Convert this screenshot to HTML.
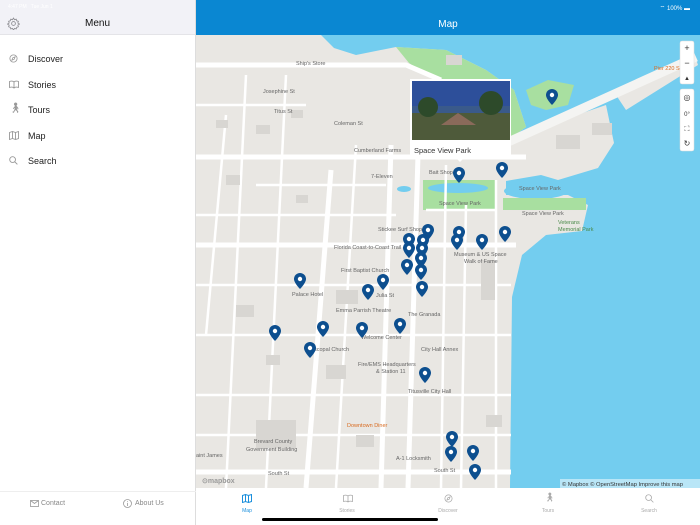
<!DOCTYPE html>
<html><head><meta charset="utf-8"><style>
*{margin:0;padding:0;box-sizing:border-box}
body{width:700px;height:525px;overflow:hidden;font-family:"Liberation Sans",sans-serif;background:#fff;position:relative}
#side{position:absolute;left:0;top:0;width:196px;height:525px;background:#fff;border-right:1px solid #ddd}
#sh{height:35px;background:#f2f2f7;border-bottom:1px solid #e4e4e8;position:relative}
#sh .t{position:absolute;left:0;right:0;top:18px;text-align:center;font-size:10px;color:#111}
.st{position:absolute;top:4px;font-size:5px;color:#fff}
.mi{position:absolute;left:28px;font-size:9px;color:#222}
.ic{position:absolute;left:9px}
#sf{position:absolute;top:491px;left:0;width:196px;border-top:1px solid #eee;height:34px;font-size:7px;color:#888}
#hdr{position:absolute;left:196px;top:0;width:504px;height:35px;background:#0a87d2}
#hdr .t{position:absolute;left:0;right:0;top:19px;text-align:center;color:#fff;font-size:10px}
#map{position:absolute;left:196px;top:35px}
#tab{position:absolute;left:196px;top:488px;width:504px;height:37px;background:#fff}
.tb{position:absolute;top:20px;font-size:5px;color:#aaa;text-align:center;width:40px}
</style></head><body>
<div id="side">
<div id="sh"><span class="st" style="left:8px">4:47 PM &nbsp; Tue Jun 1</span>
<svg class="ic" style="left:7px;top:17px" width="13" height="13" viewBox="0 0 24 24" fill="none" stroke="#8e8e93" stroke-width="1.6"><circle cx="12" cy="12" r="3.5"/><path d="M12 2l2 3 3-1 1 3 3 1-1 3 3 2-3 2 1 3-3 1-1 3-3-1-2 3-2-3-3 1-1-3-3-1 1-3-3-2 3-2-1-3 3-1 1-3 3 1z"/></svg>
<div class="t">Menu</div></div>
<svg class="ic" style="top:54px" width="9" height="9" viewBox="0 0 10 10" fill="none" stroke="#999" stroke-width="0.9"><circle cx="5" cy="5" r="4"/><path d="M6.8 3.2L5.8 5.8 3.2 6.8 4.2 4.2z"/></svg><div class="mi" style="top:54px">Discover</div>
<svg class="ic" style="top:80px" width="10" height="9" viewBox="0 0 10 9" fill="none" stroke="#999" stroke-width="0.9"><path d="M5 2C4 1 2 1 .5 1.5v6C2 7 4 7 5 8c1-1 3-1 4.5-.5v-6C8 1 6 1 5 2zM5 2v6"/></svg><div class="mi" style="top:80px">Stories</div>
<div class="ic" style="top:103px;font-size:10px;color:#999">🚶︎</div><div class="mi" style="top:105px">Tours</div>
<svg class="ic" style="top:131px" width="10" height="9" viewBox="0 0 10 9" fill="none" stroke="#999" stroke-width="0.9"><path d="M.5 1.5l3-1 3 1 3-1v7l-3 1-3-1-3 1zM3.5.5v7M6.5 1.5v7"/></svg><div class="mi" style="top:131px">Map</div>
<svg class="ic" style="top:156px" width="9" height="9" viewBox="0 0 10 10" fill="none" stroke="#999" stroke-width="1"><circle cx="4" cy="4" r="3.2"/><path d="M6.4 6.4L9.3 9.3"/></svg><div class="mi" style="top:156px">Search</div>
<div id="sf"><svg style="position:absolute;left:30px;top:8px" width="9" height="7" viewBox="0 0 9 7" fill="none" stroke="#999" stroke-width=".8"><rect x=".5" y=".5" width="8" height="6"/><path d="M.5 .5l4 3 4-3"/></svg><span style="position:absolute;left:41px;top:8px">Contact</span>
<svg style="position:absolute;left:123px;top:7px" width="9" height="9" viewBox="0 0 9 9" fill="none" stroke="#999" stroke-width=".8"><circle cx="4.5" cy="4.5" r="4"/><path d="M4.5 4v3M4.5 2.3v.8"/></svg><span style="position:absolute;left:135px;top:8px">About Us</span></div>
</div>
<div id="hdr"><span class="st" style="right:10px;top:4px;font-size:6px">⌔ 100% ▬</span><div class="t">Map</div></div>
<svg id="map" width="504" height="453" viewBox="0 0 504 453" font-family="Liberation Sans" >
<defs><g id="p"><path d="M0 0a6 6 0 0 1 6 6c0 4-6 10-6 10S-6 10-6 6a6 6 0 0 1 6-6z" fill="#0d4f8f"/><circle cy="6" r="2.2" fill="#fff"/></g></defs>
<rect width="504" height="453" fill="#73cdef"/>
<path d="M0 0H125L138 13 160 20 200 12 250 15 290 35 318 55 330 92 316 102 410 70 418 108 402 133 362 145 345 140 310 146 310 160 372 160 392 170 386 196 350 200 326 220 316 262 314 453H0Z" fill="#e9e7e3"/>
<path d="M200 12L250 15 290 35 318 55 330 92 316 102 300 80 265 60 230 40 213 28Z" fill="#a8dfa0"/>
<path d="M330 55L352 45 378 50 372 70 350 75 335 70Z" fill="#a8dfa0"/>
<ellipse cx="340" cy="156" rx="32" ry="8" fill="#73cdef"/>
<path d="M420 60L470 32 498 18 502 30 470 50 430 75Z" fill="#e9e7e3"/>
<path d="M310 108L500 22" stroke="#f4f4f2" stroke-width="9"/>
<rect x="227" y="145" width="72" height="30" fill="#a8dfa0"/><ellipse cx="262" cy="153" rx="30" ry="5" fill="#73cdef"/>
<rect x="307" y="163" width="83" height="12" fill="#a8dfa0"/>
<ellipse cx="208" cy="154" rx="7" ry="3" fill="#73cdef"/>
<g stroke="#fff" stroke-width="5" fill="none">
<path d="M0 30H210L245 45"/><path d="M0 122H330"/><path d="M0 210H320"/><path d="M0 437H315"/>
<path d="M195 110L185 453"/><path d="M222 120L212 453"/><path d="M135 135L110 453"/>
</g>
<g stroke="#fff" stroke-width="2.5" fill="none">
<path d="M0 70H110M0 180H200M0 250H315M0 300H315M0 360H315M0 400H315M60 150H190"/>
<path d="M50 40L30 453M90 40L70 453M30 80L10 300M160 110L140 453M250 130L245 453M270 170L265 453M300 145L300 453M230 175L300 175"/>
</g>
<g fill="#d8d6d2">
<rect x="20" y="85" width="12" height="8"/><rect x="60" y="90" width="14" height="9"/><rect x="95" y="75" width="12" height="8"/><rect x="30" y="140" width="14" height="10"/><rect x="100" y="160" width="12" height="8"/><rect x="40" y="270" width="18" height="12"/><rect x="70" y="320" width="14" height="10"/><rect x="130" y="330" width="20" height="14"/><rect x="160" y="400" width="18" height="12"/><rect x="60" y="385" width="40" height="28"/><rect x="290" y="380" width="16" height="12"/><rect x="140" y="255" width="22" height="14"/><rect x="285" y="225" width="14" height="40"/><rect x="360" y="100" width="24" height="14"/><rect x="396" y="88" width="20" height="12"/><rect x="250" y="20" width="16" height="10"/><rect x="275" y="105" width="18" height="10"/>
</g>
<g font-size="5.5" fill="#666">
<text x="100" y="30">Ship's Store</text><text x="67" y="58">Josephine St</text><text x="78" y="78">Titus St</text><text x="138" y="90">Coleman St</text><text x="158" y="117">Cumberland Farms</text><text x="175" y="143">7-Eleven</text><text x="233" y="139">Bait Shop</text><text x="243" y="170">Space View Park</text><text x="323" y="155">Space View Park</text><text x="326" y="180">Space View Park</text><text x="362" y="189" fill="#4a8a4a">Veterans</text><text x="362" y="196" fill="#4a8a4a">Memorial Park</text><text x="182" y="196">Stickee Surf Shop</text><text x="138" y="214">Florida Coast-to-Coast Trail</text><text x="145" y="237">First Baptist Church</text><text x="258" y="221">Museum &amp; US Space</text><text x="268" y="228">Walk of Fame</text><text x="96" y="261">Palace Hotel</text><text x="180" y="262">Julia St</text><text x="140" y="277">Emma Parrish Theatre</text><text x="212" y="281">The Granada</text><text x="165" y="304">Welcome Center</text><text x="225" y="316">City Hall Annex</text><text x="162" y="331">Fire/EMS Headquarters</text><text x="180" y="338">&amp; Station 11</text><text x="212" y="358">Titusville City Hall</text><text x="151" y="392" fill="#d86a1f">Downtown Diner</text><text x="58" y="408">Brevard County</text><text x="50" y="416">Government Building</text><text x="200" y="425">A-1 Locksmith</text><text x="72" y="440">South St</text><text x="238" y="437">South St</text><text x="110" y="316">Episcopal Church</text><text x="0" y="422">aint James</text><text x="458" y="35" fill="#d86a1f">Pier 220 Seaf</text>
</g>
<text x="6" y="448" font-size="7" fill="#999" font-weight="bold">⊙mapbox</text>
<rect x="364" y="444" width="140" height="9" fill="rgba(255,255,255,.5)"/><text x="366" y="451" font-size="5.8" fill="#333">© Mapbox © OpenStreetMap Improve this map</text>
<g transform="translate(0,-6)">
<use href="#p" x="356" y="60"/><use href="#p" x="263" y="138"/><use href="#p" x="306" y="133"/><use href="#p" x="232" y="195"/><use href="#p" x="263" y="197"/><use href="#p" x="309" y="197"/><use href="#p" x="213" y="204"/><use href="#p" x="227" y="205"/><use href="#p" x="261" y="205"/><use href="#p" x="286" y="205"/><use href="#p" x="213" y="213"/><use href="#p" x="226" y="213"/><use href="#p" x="225" y="223"/><use href="#p" x="211" y="230"/><use href="#p" x="225" y="235"/><use href="#p" x="104" y="244"/><use href="#p" x="187" y="245"/><use href="#p" x="172" y="255"/><use href="#p" x="226" y="252"/><use href="#p" x="79" y="296"/><use href="#p" x="127" y="292"/><use href="#p" x="166" y="293"/><use href="#p" x="204" y="289"/><use href="#p" x="114" y="313"/><use href="#p" x="229" y="338"/><use href="#p" x="256" y="402"/><use href="#p" x="255" y="417"/><use href="#p" x="277" y="416"/><use href="#p" x="279" y="435"/>
</g>
<g>
<rect x="214" y="44" width="101" height="78" fill="#fff"/>
<rect x="216" y="46" width="98" height="59" fill="#3a5a8a"/>
<rect x="216" y="46" width="98" height="25" fill="#2d4f9a"/>
<rect x="216" y="78" width="98" height="27" fill="#4e5a3a"/>
<circle cx="232" cy="72" r="10" fill="#2d4a2a"/><circle cx="295" cy="68" r="12" fill="#2d4a2a"/><path d="M245 90L262 78 280 90Z" fill="#8a6a5a"/>
<text x="218" y="118" font-size="7.5" fill="#333">Space View Park</text>
<path d="M259 122l5 5 5-5" fill="#fff"/>
</g>
<g fill="#fff" stroke="#ddd" stroke-width=".5">
<rect x="484" y="6" width="14" height="43" rx="2"/><rect x="484" y="54" width="14" height="62" rx="2"/>
</g>
<g font-size="9" fill="#333" text-anchor="middle"><text x="491" y="16">+</text><text x="491" y="31">−</text><text x="491" y="45" font-size="6">▲</text><text x="491" y="65" font-size="8">◎</text><text x="491" y="81" font-size="6">0°</text><text x="491" y="96" font-size="7">⛶</text><text x="491" y="111" font-size="8">↻</text></g>
</svg>
<div id="tab">
<svg style="position:absolute;left:46px;top:6px" width="10" height="9" viewBox="0 0 10 9" fill="none" stroke="#1a8fdd" stroke-width="1"><path d="M.5 1.5l3-1 3 1 3-1v7l-3 1-3-1-3 1zM3.5.5v7M6.5 1.5v7"/></svg>
<div class="tb" style="left:31px;color:#1a8fdd">Map</div>
<svg style="position:absolute;left:147px;top:6px" width="10" height="9" viewBox="0 0 10 9" fill="none" stroke="#aaa" stroke-width=".8"><path d="M5 2C4 1 2 1 .5 1.5v6C2 7 4 7 5 8c1-1 3-1 4.5-.5v-6C8 1 6 1 5 2zM5 2v6"/></svg>
<div class="tb" style="left:131px">Stories</div>
<svg style="position:absolute;left:248px;top:6px" width="9" height="9" viewBox="0 0 10 10" fill="none" stroke="#aaa" stroke-width=".8"><circle cx="5" cy="5" r="4"/><path d="M6.8 3.2L5.8 5.8 3.2 6.8 4.2 4.2z"/></svg>
<div class="tb" style="left:232px">Discover</div>
<div style="position:absolute;left:348px;top:4px;font-size:9px;color:#aaa">🚶︎</div>
<div class="tb" style="left:332px">Tours</div>
<svg style="position:absolute;left:449px;top:6px" width="9" height="9" viewBox="0 0 10 10" fill="none" stroke="#aaa" stroke-width=".9"><circle cx="4" cy="4" r="3.2"/><path d="M6.4 6.4L9.3 9.3"/></svg>
<div class="tb" style="left:433px">Search</div>
</div>
<div style="position:absolute;left:262px;top:518px;width:176px;height:3px;border-radius:2px;background:#000"></div>
</body></html>
